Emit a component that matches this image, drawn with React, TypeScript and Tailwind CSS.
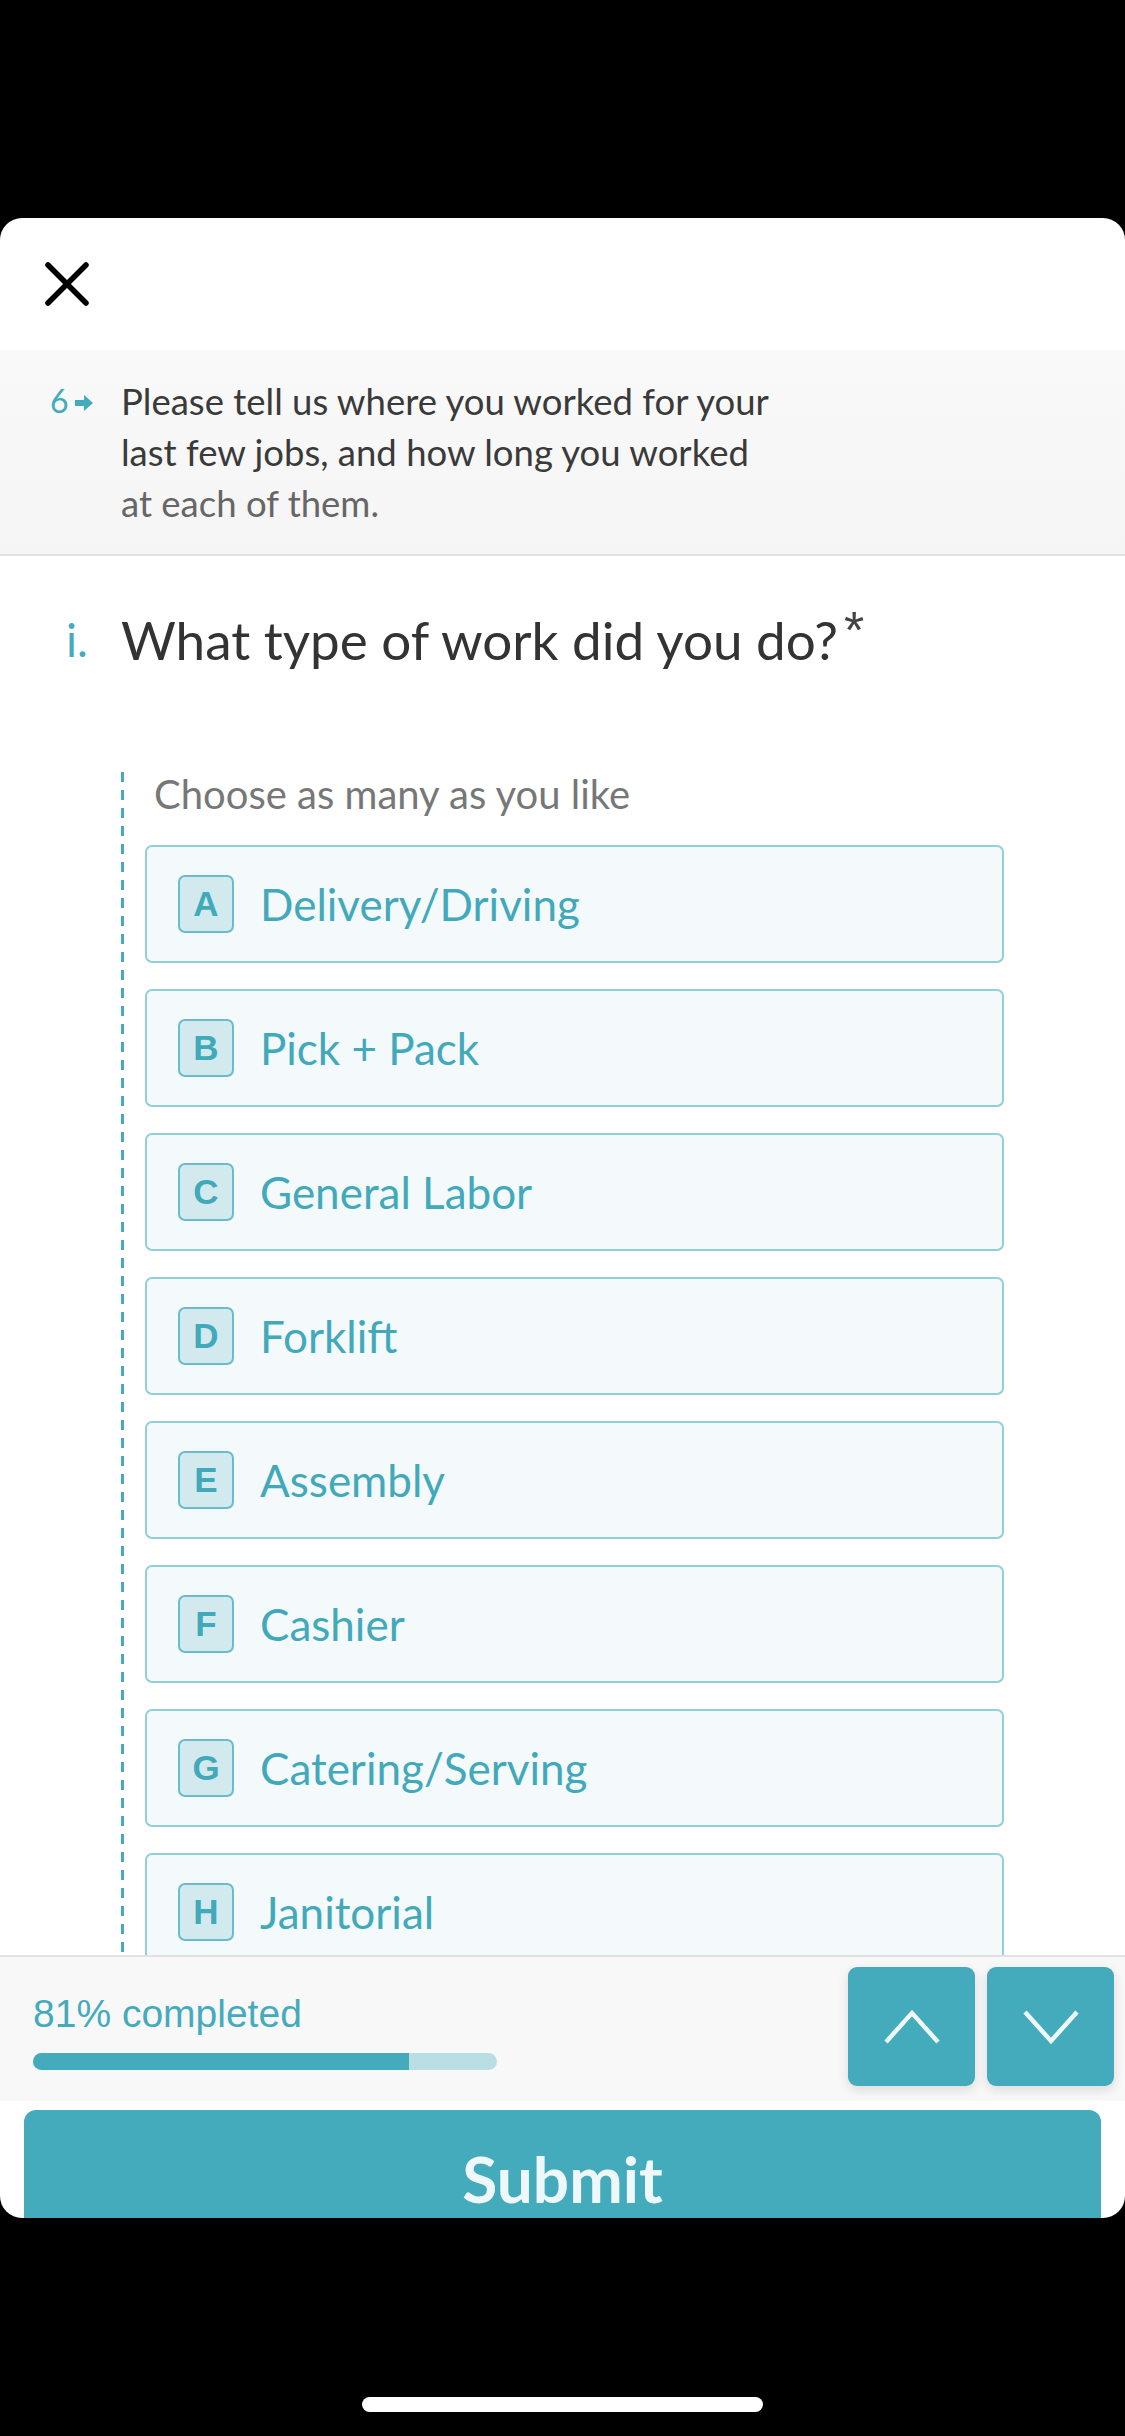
const options: [string, string][] = [
  ['A', 'Delivery/Driving'],
  ['B', 'Pick + Pack'],
  ['C', 'General Labor'],
  ['D', 'Forklift'],
  ['E', 'Assembly'],
  ['F', 'Cashier'],
  ['G', 'Catering/Serving'],
  ['H', 'Janitorial'],
];

const Option = ({ letter, label }: { letter: string; label: string }) => (
  <div className="flex h-[118px] w-[859px] shrink-0 items-center rounded-[7px] border-2 border-[#8fd0da] bg-[#f4f9fb] pl-[31px]">
    <div className="flex h-[58px] w-[56px] items-center justify-center rounded-[7px] border-2 border-[#6bbccb] bg-[#d2eaee] font-['Liberation_Sans',sans-serif] text-[35px] font-bold text-[#42a9bb]">
      {letter}
    </div>
    <span className="ml-[26px] font-['Lato',sans-serif] text-[44px] leading-none text-[#42a9bb]">{label}</span>
  </div>
);

export default function App() {
  return (
    <div className="flex h-[2436px] w-[1125px] flex-col bg-black">
      <div className="h-[218px] shrink-0" />

      {/* sheet */}
      <div className="flex h-[2000px] w-[1125px] shrink-0 flex-col overflow-hidden rounded-[22px] bg-white font-['Lato',sans-serif]">
        {/* header */}
        <div className="flex h-[132px] shrink-0 items-center pl-[45px]">
          <svg width="44" height="44" viewBox="0 0 44 44">
            <path d="M3 3 L41 41 M41 3 L3 41" stroke="#000" strokeWidth="5.5" strokeLinecap="round" />
          </svg>
        </div>

        {/* group intro */}
        <div className="flex h-[206px] shrink-0 border-b-2 border-[#e2e2e2] bg-gradient-to-b from-[#f9f9f9] to-[#f5f5f5] pt-[26px]">
          <div className="flex w-[121px] shrink-0 items-start pl-[50px] pt-[5px]">
            <span className="text-[32px] leading-[40px] text-[#44abbd]">6</span>
            <svg width="18" height="16" viewBox="0 0 18 16" className="ml-[6px] mt-[14px]">
              <path d="M0 5 H9 V0 L18 8 L9 16 V11 H0 Z" fill="#44abbd" />
            </svg>
          </div>
          <p className="text-[36.5px] leading-[51px] text-[#3a3a3a]">
            Please tell us where you worked for your
            <br />
            last few jobs, and how long you worked
            <br />
            <span className="text-[#666]">at each of them.</span>
          </p>
        </div>

        {/* question */}
        <div className="flex h-[1399px] shrink-0 flex-col overflow-hidden">
          <div className="flex pt-[52px]">
            <span className="w-[121px] shrink-0 pl-[66px] text-[46px] leading-[64px] text-[#44abbd]">i.</span>
            <h1 className="flex items-start text-[53px] leading-[64px] text-[#333]">
              What type of work did you do?
              <span className="ml-[6px] mt-[-4px] font-['Liberation_Sans',sans-serif] text-[52px] leading-[52px] text-[#444]">*</span>
            </h1>
          </div>

          <div className="ml-[121px] mt-[100px] flex">
            <div className="w-[3px] shrink-0 self-stretch bg-[repeating-linear-gradient(to_bottom,#44abbd_0px,#44abbd_10px,transparent_10px,transparent_18px)]" />
            <div className="flex flex-col pb-[40px] pl-[21px]">
              <p className="pl-[9px] text-[40px] leading-[44px] text-[#777]">Choose as many as you like</p>
              <div className="mt-[29px] flex flex-col gap-[26px]">
                {options.map(([l, t]) => (
                  <Option key={l} letter={l} label={t} />
                ))}
              </div>
            </div>
          </div>
        </div>

        {/* footer */}
        <div className="flex h-[146px] shrink-0 justify-between border-t-2 border-[#e2e2e2] bg-[#f8f8f8]">
          <div className="flex flex-col pl-[33px] pt-[35px]">
            <span className="font-['Liberation_Sans',sans-serif] text-[39px] leading-[44px] text-[#44abbd]">81% completed</span>
            <div className="mt-[17px] h-[17px] w-[464px] overflow-hidden rounded-full bg-[#b9dfe5]">
              <div className="h-full w-[81%] bg-[#44abbd]" />
            </div>
          </div>
          <div className="flex gap-[12px] pr-[11px] pt-[10px]">
            <button className="flex h-[119px] w-[127px] items-center justify-center rounded-[9px] bg-[#44abbd] shadow-[0_4px_12px_rgba(0,0,0,0.12)]">
              <svg width="58" height="36" viewBox="0 0 58 36">
                <path d="M3 33 L29 4 L55 33" fill="none" stroke="#eef8fa" strokeWidth="4.5" />
              </svg>
            </button>
            <button className="flex h-[119px] w-[127px] items-center justify-center rounded-[9px] bg-[#44abbd] shadow-[0_4px_12px_rgba(0,0,0,0.12)]">
              <svg width="58" height="36" viewBox="0 0 58 36">
                <path d="M3 3 L29 32 L55 3" fill="none" stroke="#eef8fa" strokeWidth="4.5" />
              </svg>
            </button>
          </div>
        </div>

        {/* submit */}
        <div className="shrink-0 px-[24px] pt-[9px]">
          <button className="flex h-[138px] w-full items-center justify-center rounded-[12px] bg-[#44abbd] text-[64px] font-bold text-[#eef8fa]">
            Submit
          </button>
        </div>
      </div>

      {/* home indicator */}
      <div className="flex flex-1 justify-center">
        <div className="mt-[179px] h-[15px] w-[401px] rounded-full bg-white" />
      </div>
    </div>
  );
}
